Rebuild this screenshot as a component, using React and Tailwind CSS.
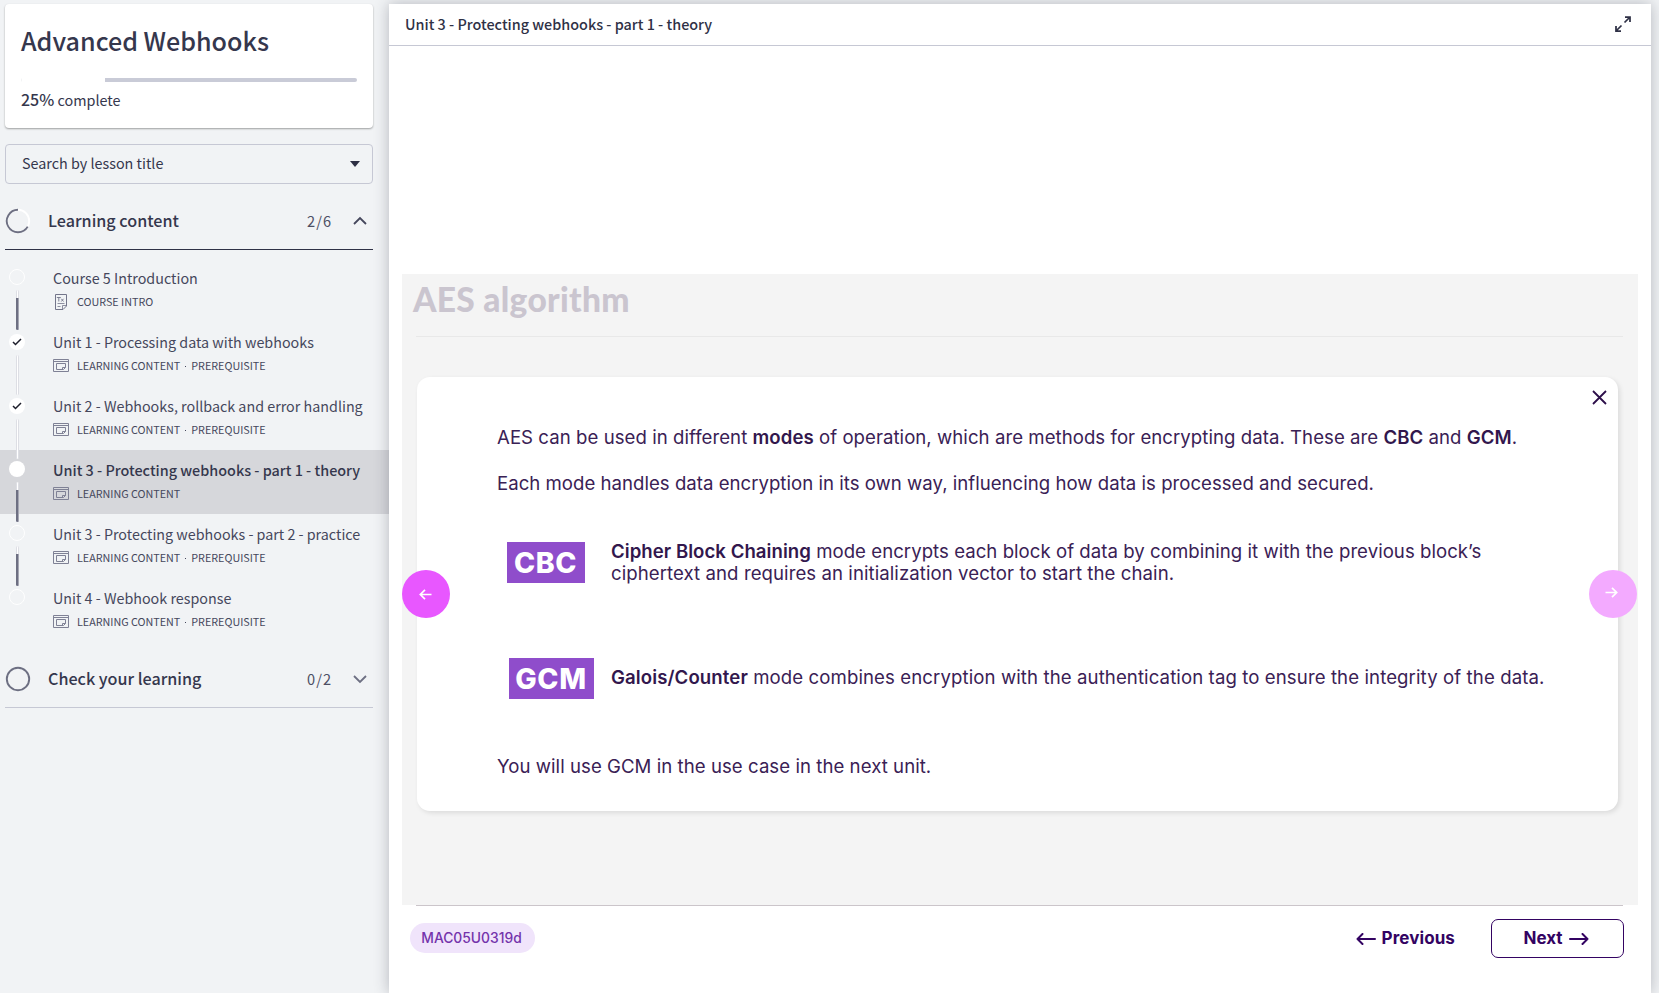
const lessons = [
  { title: "Course 5 Introduction", meta: "COURSE INTRO", icon: "doc", state: "open", line: "todo" },
  { title: "Unit 1 - Processing data with webhooks", meta: "LEARNING CONTENT", pre: true, state: "done", line: "done" },
  { title: "Unit 2 - Webhooks, rollback and error handling", meta: "LEARNING CONTENT", pre: true, state: "done", line: "done" },
  { title: "Unit 3 - Protecting webhooks - part 1 - theory", meta: "LEARNING CONTENT", state: "current", line: "todo" },
  { title: "Unit 3 - Protecting webhooks - part 2 - practice", meta: "LEARNING CONTENT", pre: true, state: "open", line: "todo" },
  { title: "Unit 4 - Webhook response", meta: "LEARNING CONTENT", pre: true, state: "open" },
];

function DocIcon() {
  return (
    <svg width="16" height="16" viewBox="0 0 16 16" fill="none" stroke="#73758a" strokeWidth="1">
      <path d="M2.5.5h11V12L10 15.5H2.5z" />
      <path d="M9.5 15v-3.5h4M4.5 9.5h7M4.5 12.5h3" strokeWidth="0.8" />
      <path d="M3.8 3.5h4M5.8 3.5v4M8.3 4.8l2.2 2.7M10.5 4.8L8.3 7.5" strokeWidth="0.9" />
    </svg>
  );
}

function CourseIcon() {
  return (
    <svg width="16" height="16" viewBox="0 0 16 16" fill="none" stroke="#7f8195" strokeWidth="1">
      <path d="M.5 1.5h15v12H.5zM.5 3.5h15" />
      <path d="M3.5 5.5h9v4l-2 2h-7zM9.5 11.5v-2h3" />
    </svg>
  );
}

function StatusDot({ state }) {
  if (state === "done")
    return (
      <div className="flex size-4 items-center justify-center rounded-full bg-white">
        <svg width="10" height="8" viewBox="0 0 10 8" fill="none" stroke="#1d1e2b" strokeWidth="1.5">
          <path d="M1 4l2.5 2.5L9 1" />
        </svg>
      </div>
    );
  if (state === "current") return <div className="size-4 rounded-full bg-white" />;
  return <div className="size-4 rounded-full border border-white" />;
}

function Connector({ kind }) {
  return (
    <div className="mt-[5px] ml-px flex h-10 w-[3px] flex-col rounded-sm border-x border-[#dddee4] bg-white">
      {kind === "todo" && <div className="-mx-px mt-2 flex-1 rounded-b-sm border-r border-[#a5a6b3] bg-[#6d6f82]" />}
    </div>
  );
}

function Lesson({ item }) {
  const current = item.state === "current";
  return (
    <li className={current ? "flex h-16 bg-[#d6d7db]" : "flex h-16"}>
      <div className={item.state === "done" ? "flex w-[53px] shrink-0 flex-col pt-3 pl-[9px]" : "flex w-[53px] shrink-0 flex-col pt-[11px] pl-[9px]"}>
        <div className="flex w-4 flex-col items-center">
          <StatusDot state={item.state} />
          {item.line && <Connector kind={item.line} />}
        </div>
      </div>
      <div className="pt-2 whitespace-nowrap">
        <div className={current ? "text-[14.4px] leading-6 font-medium" : "text-[14.32px] leading-6 text-[#45475c]"}>{item.title}</div>
        <div className="flex h-6 items-center text-[10.75px] leading-6 text-[#45475c]">
          {item.icon === "doc" ? <DocIcon /> : <CourseIcon />}
          <span className="ml-2">{item.meta}</span>
          {item.pre && <span className="mx-[5px] size-px bg-[#45475c]" />}
          {item.pre && <span>PREREQUISITE</span>}
        </div>
      </div>
    </li>
  );
}

function Sidebar() {
  return (
    <aside className="w-[389px] shrink-0 pt-1 font-['Noto_Sans_CJK_SC',sans-serif] text-[#35374d]">
      <div className="mr-4 ml-[5px] h-[124px] rounded bg-white px-4 pt-4 shadow-[0_1px_2px_rgba(0,0,0,0.35)]">
        <h1 className="text-[25.1px] leading-10 font-medium whitespace-nowrap">Advanced Webhooks</h1>
        <div className="mt-[18px] flex h-1 overflow-hidden rounded-sm">
          <div className="w-1/4 border-l border-[#f1f2f4] bg-white" />
          <div className="flex-1 bg-[#c9cbd7]" />
        </div>
        <p className="mt-[5px] text-[14.4px] leading-6">
          <span className="text-[16px] font-medium">25%</span> complete
        </p>
      </div>
      <div className="mt-4 mr-4 ml-[5px] flex h-10 items-center justify-between rounded border border-[#c6c8d4] pr-3 pl-4 text-[14.35px]">
        <span className="pb-0.5 leading-6">Search by lesson title</span>
        <svg width="10" height="6" viewBox="0 0 10 6" fill="#2c2e43">
          <path d="M0 0h10L5 6z" />
        </svg>
      </div>
      <div className="mt-[9px] mr-4 ml-[5px] flex h-[57px] items-center border-b border-[#2f3146]">
        <svg width="26" height="26" viewBox="0 0 26 26" fill="none" strokeWidth="1.9" className="-mt-px">
          <circle cx="13" cy="13" r="11.2" stroke="#fff" />
          <path d="M13 1.8A11.2 11.2 0 1 0 22.7 18.6" stroke="#6d6f82" />
        </svg>
        <span className="ml-[17px] flex-1 pb-0.5 text-[16.15px] font-medium">Learning content</span>
        <span className="mr-[21px] text-[14.6px] tracking-[1px] text-[#4d4f64]">2/6</span>
        <svg width="14" height="9" viewBox="0 0 14 9" fill="none" stroke="#45475c" strokeWidth="1.8" className="mr-1.5 -mt-0.5">
          <path d="M1 8l6-6 6 6" />
        </svg>
      </div>
      <ul className="pt-2">
        {lessons.map((l) => (
          <Lesson key={l.title} item={l} />
        ))}
      </ul>
      <div className="mt-[9px] mr-4 ml-[5px] flex h-[57px] items-center border-b border-[#c6c8d4]">
        <svg width="26" height="26" viewBox="0 0 26 26" fill="none" strokeWidth="1.9" className="-mt-px">
          <circle cx="13" cy="13" r="11.2" stroke="#6d6f82" />
        </svg>
        <span className="ml-[17px] flex-1 pb-0.5 text-[16.15px] font-medium">Check your learning</span>
        <span className="mr-[21px] text-[14.6px] tracking-[1px] text-[#4d4f64]">0/2</span>
        <svg width="14" height="9" viewBox="0 0 14 9" fill="none" stroke="#6d6f82" strokeWidth="1.8" className="mr-1.5">
          <path d="M1 1l6 6 6-6" />
        </svg>
      </div>
    </aside>
  );
}

function Card() {
  return (
    <section className="relative ml-[15px] h-[434px] w-[1201px] rounded-[13px] bg-white pl-20 text-[18.6px] leading-[22px] text-[#3a2155] shadow-[2px_2px_5px_rgba(0,0,0,0.1)]">
      <svg width="15" height="15" viewBox="0 0 15 15" fill="none" stroke="#2d0f4a" strokeWidth="1.8" className="absolute top-[12.5px] right-[11px]">
        <path d="M1 1l13 13M14 1L1 14" />
      </svg>
      <p className="pt-[49px] tracking-[0.05px]">
        AES can be used in different <b className="font-semibold text-[#32174d]">modes</b> of operation, which are methods for encrypting data. These are{" "}
        <b className="font-semibold text-[#32174d]">CBC</b> and <b className="font-semibold text-[#32174d]">GCM</b>.
      </p>
      <p className="mt-6 tracking-[0.02px]">Each mode handles data encryption in its own way, influencing how data is processed and secured.</p>
      <div className="mt-12 ml-[10px] flex">
        <div className="flex h-[41px] w-[78px] items-center justify-center bg-[#8f4dcb] pt-px pr-px text-[28.5px] font-extrabold tracking-[0.6px] text-white">CBC</div>
        <p className="-mt-0.5 ml-[26px] tracking-[0.04px] whitespace-nowrap">
          <b className="font-semibold text-[#32174d]">Cipher Block Chaining</b> mode encrypts each block of data by combining it with the previous block’s
          <br />
          <span className="tracking-[0.07px]">ciphertext and requires an initialization vector to start the chain.</span>
        </p>
      </div>
      <div className="mt-[74px] ml-[12px] flex">
        <div className="flex h-[41px] w-[85px] items-center justify-center bg-[#8f4dcb] pt-px pr-px text-[28.5px] font-extrabold tracking-[0.6px] text-white">GCM</div>
        <p className="mt-2 ml-[17px] tracking-[0.1px] whitespace-nowrap">
          <b className="font-semibold text-[#32174d]">Galois/Counter</b> mode combines encryption with the authentication tag to ensure the integrity of the data.
        </p>
      </div>
      <p className="mt-14 tracking-[0.05px]">You will use GCM in the use case in the next unit.</p>
    </section>
  );
}

function Arrow({ left, w, h, sw }) {
  return (
    <svg width={w} height={h} viewBox="0 0 20 12" fill="none" stroke="currentColor" strokeWidth={sw} strokeLinecap="round" strokeLinejoin="round">
      <path d={left ? "M19 6H1.5M6.5 1l-5 5 5 5" : "M1 6h17.5M13.5 1l5 5-5 5"} />
    </svg>
  );
}

export default function App() {
  return (
    <div className="flex h-[993px] w-[1659px] overflow-hidden bg-[#f1f3f5]">
      <Sidebar />
      <main className="mt-1 flex w-[1262px] shrink-0 flex-col bg-white font-[Inter,sans-serif] shadow-[0_0_14px_rgba(40,42,60,0.3)]">
        <header className="flex h-[42px] shrink-0 items-center justify-between border-b border-[#c6c8d4] pr-5 pl-4 font-['Noto_Sans_CJK_SC',sans-serif] text-[#2f3146]">
          <span className="pb-0.5 text-[14.4px] font-medium">Unit 3 - Protecting webhooks - part 1 - theory</span>
          <svg width="16" height="16" viewBox="0 0 16 16" fill="none" stroke="currentColor" strokeWidth="1.75" className="-mt-px">
            <path d="M9.5 6.5L15 1M10 1h5v5M6.5 9.5L1 15M1 10v5h5" />
          </svg>
        </header>
        <div className="relative mt-[228px] ml-[13px] h-[631px] w-[1236px] shrink-0 bg-[#f4f4f4]">
          <h2 className="pt-[3px] pb-px pl-[11px] font-[Lato,sans-serif] text-[33.5px] leading-[44px] font-black tracking-[0.3px] text-[#cac5cf]">AES algorithm</h2>
          <div className="mt-[14px] mr-[15px] mb-10 ml-3.5 h-px bg-[#e8e8e8]" />
          <Card />
          <button className="absolute top-[296px] left-0 flex size-12 items-center justify-center rounded-full bg-[#e857ff] pr-0.5 text-white">
            <svg width="13" height="11" viewBox="0 0 13 11" fill="none" stroke="currentColor" strokeWidth="1.7">
              <path d="M12.5 5.5H1.5M6 .8L1.3 5.5 6 10.2" />
            </svg>
          </button>
          <button className="absolute top-[296px] right-px flex size-12 items-center justify-center rounded-full bg-[#f3aaff] pr-[3px] pb-[3px] text-white">
            <svg width="13" height="11" viewBox="0 0 13 11" fill="none" stroke="currentColor" strokeWidth="1.7">
              <path d="M.5 5.5h11M7 .8l4.7 4.7L7 10.2" />
            </svg>
          </button>
        </div>
        <div className="ml-[27px] h-px w-[1207px] shrink-0 bg-[#cbc5ca]" />
        <footer className="mt-[13px] mr-[27px] ml-[21px] flex items-center text-[17px] font-bold text-[#330362]">
          <span className="-mt-px flex h-[30px] w-[125px] items-center justify-center rounded-full bg-[#f0e4fb] pr-1.5 pl-1 text-[13.85px] font-medium text-[#7433ab]">MAC05U0319d</span>
          <button className="ml-auto flex items-center gap-1.5">
            <Arrow left w={20} h={12} sw={2} />
            <span className="tracking-[0.1px]">Previous</span>
          </button>
          <button className="ml-9 flex h-[39px] w-[133px] items-center justify-center gap-1.5 rounded-[7px] border border-[#330362] pr-[3px]">
            Next
            <Arrow w={20} h={12} sw={2} />
          </button>
        </footer>
      </main>
    </div>
  );
}
